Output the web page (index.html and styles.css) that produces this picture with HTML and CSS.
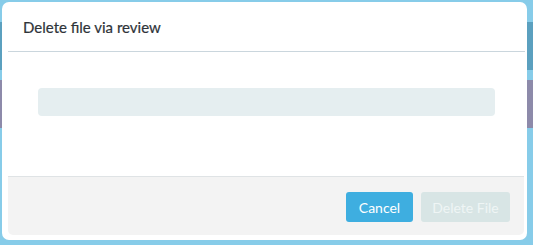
FILE: index.html
```html
<!DOCTYPE html>
<html lang="en">
<head>
    <meta charset="UTF-8">
    <meta name="viewport" content="width=device-width, initial-scale=1.0">
    <title>Delete file via review</title>
    <link rel="stylesheet" href="styles.css">
</head>
<body>
    <div class="modal">
        <div class="modal-header">
            <h2 class="modal-title">Delete file via review</h2>
        </div>

        <div class="modal-body">
            <div class="placeholder"></div>
        </div>

        <div class="modal-footer">
            <button class="btn btn-primary">Cancel</button>
            <button class="btn btn-disabled" disabled>Delete File</button>
        </div>
    </div>
</body>
</html>
```

FILE: styles.css
```css
body {
    margin: 0;
    height: 245px;
    overflow: hidden;
    font-family: Lato, "Open Sans", sans-serif;
    /* page behind the overlay */
    background: linear-gradient(to bottom,
        #87cce9 0, #87cce9 22px,
        #5ba0bf 22px, #5ba0bf 70px,
        #87cce9 70px, #87cce9 80px,
        #8d8aaa 80px, #8d8aaa 128px,
        #87cce9 128px);
}

.modal {
    display: flex;
    flex-direction: column;
    box-sizing: border-box;
    width: 525px;
    height: 238px;
    margin: 2px 0 0 2px;
    padding: 0 2px 5px 6px;
    background-color: white;
    border-radius: 7px;
}

.modal-header {
    height: 49px;
    display: flex;
    align-items: center;
    padding-left: 15px;
    border-bottom: 1px solid #cad6dd;
}

.modal-title {
    margin: 0;
    font-size: 15px;
    font-weight: normal;
    color: #2f3439;
    -webkit-text-stroke: 0.2px #2f3439;
}

.modal-body {
    flex: 1;
    padding: 36px 30px 0;
}

.placeholder {
    height: 28px;
    background-color: #e5eef0;
    border-radius: 4px;
}

.modal-footer {
    display: flex;
    justify-content: flex-end;
    gap: 8px;
    padding: 15px 14px 13px 0;
    margin-right: 1px;
    background-color: #f3f3f3;
    border-top: 1px solid #dfe3e5;
    border-radius: 0 0 5px 5px;
}

.btn {
    height: 30px;
    padding: 0;
    font-family: inherit;
    font-size: 14px;
    white-space: nowrap;
    border: none;
    border-radius: 3px;
    cursor: pointer;
}

.btn-primary {
    width: 67px;
    background-color: #3eaee0;
    color: white;
}

.btn-disabled {
    width: 89px;
    background-color: #d8e5e5;
    color: #eff5f5;
    cursor: default;
}
```
